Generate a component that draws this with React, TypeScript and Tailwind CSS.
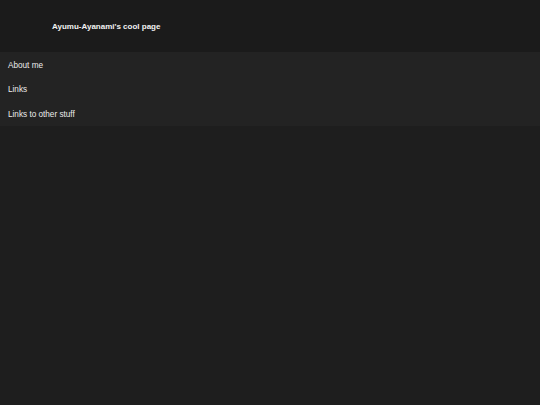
const items = ["About me", "Links", "Links to other stuff"];

export default function App() {
  return (
    <div className="min-h-screen w-full bg-[#1e1e1e] font-['Liberation_Sans',Arial,sans-serif]">
      <header className="h-[52px] bg-[#1b1b1b] flex items-center pl-[52px] pt-[2px]">
        <h1 className="text-[8px] font-bold text-[#f2f2f2] leading-none">
          Ayumu-Ayanami's cool page
        </h1>
      </header>
      <nav className="bg-[#232323] flex flex-col">
        {items.map((item) => (
          <a
            key={item}
            href="#"
            className="h-[24.67px] flex items-center px-2 pt-[3px] text-[8.2px] text-[#ececec] leading-none"
          >
            {item}
          </a>
        ))}
      </nav>
    </div>
  );
}
